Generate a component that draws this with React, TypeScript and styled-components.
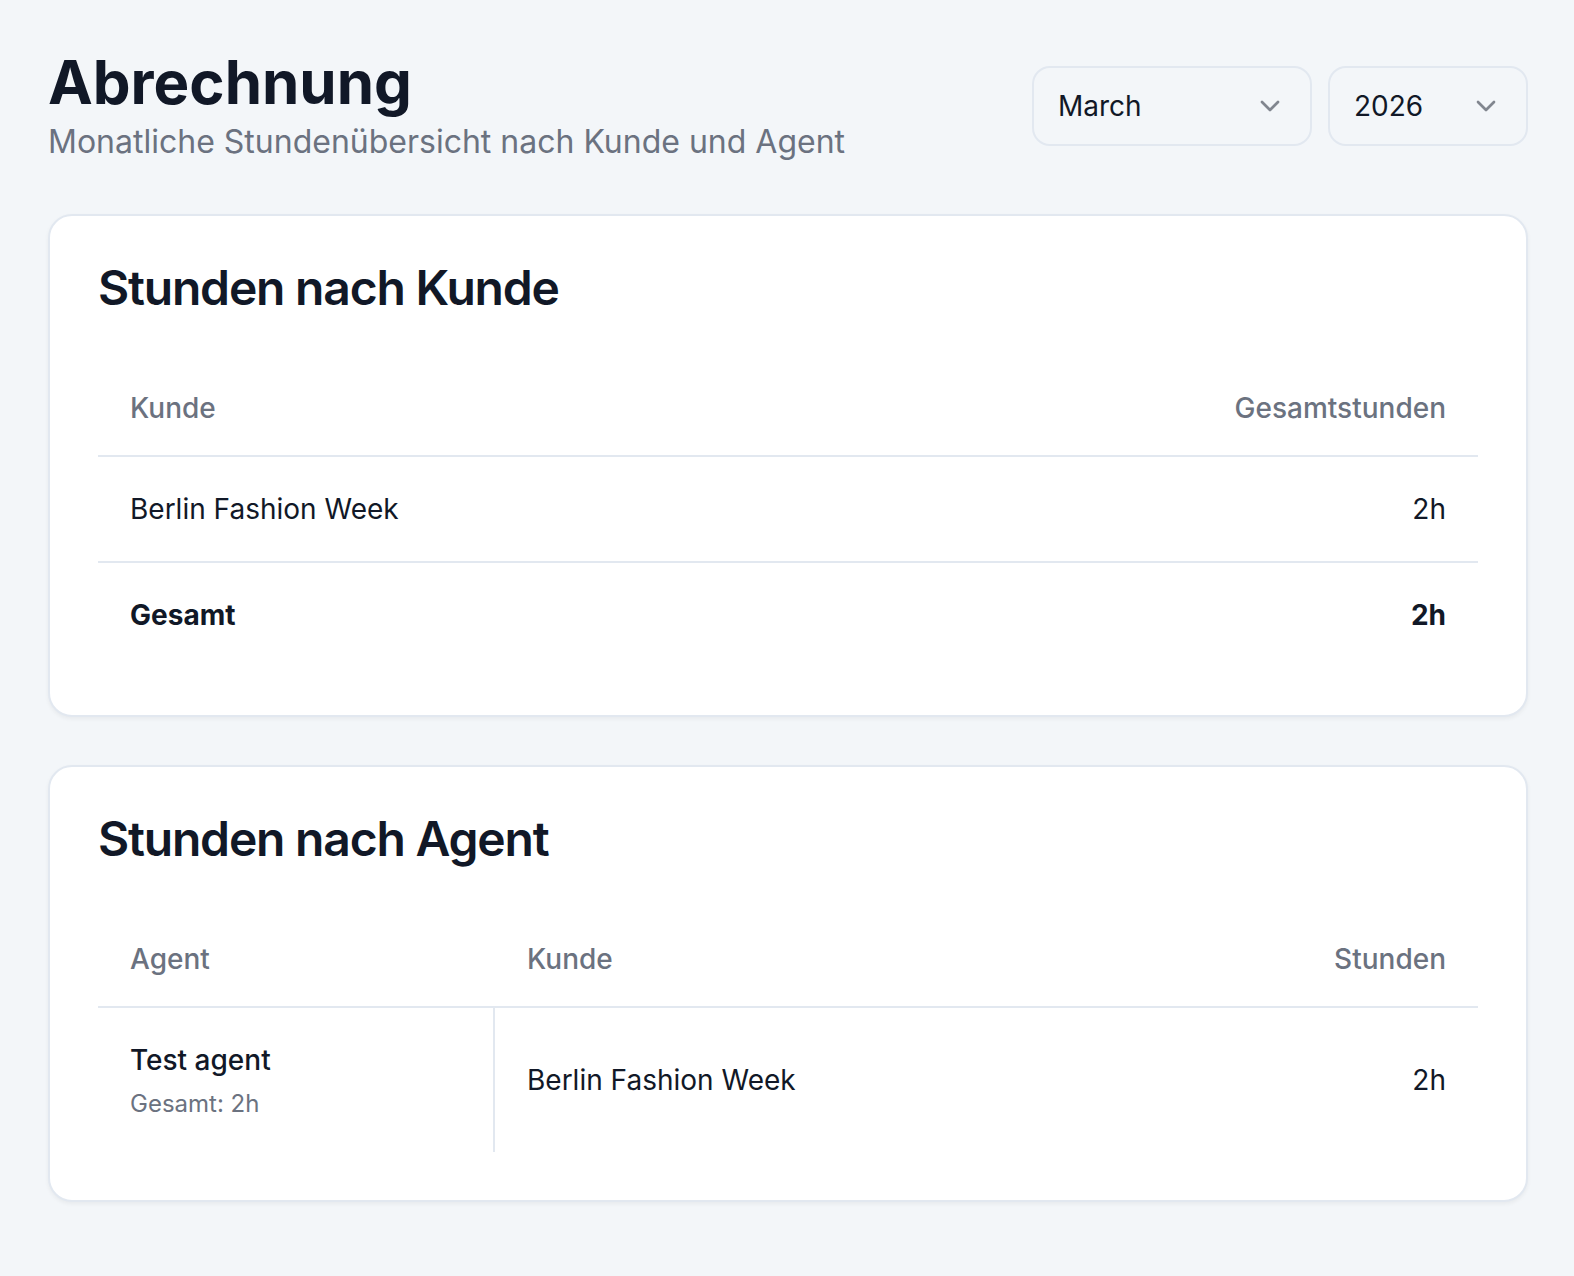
import React from 'react';
import styled, { createGlobalStyle } from 'styled-components';
import { ChevronDown } from 'lucide-react';

const GlobalStyle = createGlobalStyle`
  * { box-sizing: border-box; }
  body {
    margin: 0;
    background-color: #f3f6f9;
    font-family: Inter, "Noto Sans", sans-serif;
    color: #111827;
  }
`;

const Page = styled.div`
  padding: 46px 46px 48px 48px;
`;

const Header = styled.div`
  display: flex;
  justify-content: space-between;
  align-items: center;
  margin-bottom: 48px;
`;

const Title = styled.h1`
  margin: 0;
  font-size: 60px;
  line-height: 72px;
  font-weight: 700;
`;

const Subtitle = styled.p`
  margin: 0;
  font-size: 32px;
  line-height: 48px;
  color: #6b7280;
`;

const Filters = styled.div`
  display: flex;
  gap: 16px;
`;

const Select = styled.div<{ $width: number }>`
  width: ${p => p.$width}px;
  height: 80px;
  display: flex;
  align-items: center;
  justify-content: space-between;
  padding: 0 24px;
  border: 2px solid #e2e8f0;
  border-radius: 18px;
  font-size: 28px;
  color: #111827;

  svg {
    color: #111827;
    opacity: 0.5;
  }
`;

const Card = styled.section`
  background: #fff;
  border: 2px solid #e2e8f0;
  border-radius: 24px;
  box-shadow: 0 2px 4px rgba(0, 0, 0, 0.05);
  padding: 48px;

  & + & {
    margin-top: 48px;
  }
`;

const CardTitle = styled.h2`
  margin: 0 0 48px;
  font-size: 48px;
  line-height: 48px;
  font-weight: 600;
  letter-spacing: -1.2px;
`;

const Table = styled.table`
  width: 100%;
  border-collapse: separate;
  border-spacing: 0;
  font-size: 28px;
  line-height: 40px;
`;

const Th = styled.th<{ $right?: boolean; $width?: number }>`
  padding: 28px 32px 27px;
  text-align: ${p => (p.$right ? 'right' : 'left')};
  font-weight: 500;
  color: #6b7280;
  border-bottom: 2px solid #e2e8f0;
  ${p => (p.$width ? `width: ${p.$width}px;` : '')}
`;

const Td = styled.td<{ $right?: boolean; $bold?: boolean; $divider?: boolean; $last?: boolean }>`
  padding: 32px;
  text-align: ${p => (p.$right ? 'right' : 'left')};
  font-weight: ${p => (p.$bold ? 700 : 400)};
  vertical-align: middle;
  border-bottom: ${p => (p.$last ? 'none' : '2px solid #e2e8f0')};
  ${p => (p.$divider ? 'border-right: 2px solid #e2e8f0;' : '')}
`;

const AgentName = styled.div`
  font-weight: 500;
`;

const AgentTotal = styled.div`
  margin-top: 8px;
  font-size: 24px;
  line-height: 32px;
  color: #6b7280;
`;

export default function App() {
  return (
    <>
      <GlobalStyle />
      <Page>
        <Header>
          <div>
            <Title>Abrechnung</Title>
            <Subtitle>Monatliche Stundenübersicht nach Kunde und Agent</Subtitle>
          </div>
          <Filters>
            <Select $width={280}>
              <span>March</span>
              <ChevronDown size={32} strokeWidth={2} />
            </Select>
            <Select $width={200}>
              <span>2026</span>
              <ChevronDown size={32} strokeWidth={2} />
            </Select>
          </Filters>
        </Header>

        <Card>
          <CardTitle>Stunden nach Kunde</CardTitle>
          <Table>
            <thead>
              <tr>
                <Th>Kunde</Th>
                <Th $right>Gesamtstunden</Th>
              </tr>
            </thead>
            <tbody>
              <tr>
                <Td>Berlin Fashion Week</Td>
                <Td $right>2h</Td>
              </tr>
              <tr>
                <Td $bold $last>Gesamt</Td>
                <Td $right $bold $last>2h</Td>
              </tr>
            </tbody>
          </Table>
        </Card>

        <Card>
          <CardTitle>Stunden nach Agent</CardTitle>
          <Table>
            <thead>
              <tr>
                <Th $width={397}>Agent</Th>
                <Th>Kunde</Th>
                <Th $right>Stunden</Th>
              </tr>
            </thead>
            <tbody>
              <tr>
                <Td $divider $last>
                  <AgentName>Test agent</AgentName>
                  <AgentTotal>Gesamt: 2h</AgentTotal>
                </Td>
                <Td $last>Berlin Fashion Week</Td>
                <Td $right $last>2h</Td>
              </tr>
            </tbody>
          </Table>
        </Card>
      </Page>
    </>
  );
}
